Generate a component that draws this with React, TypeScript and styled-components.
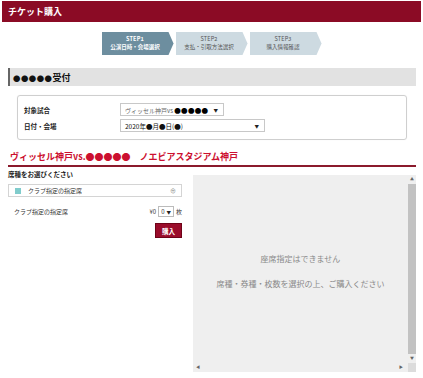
import styled, { createGlobalStyle } from "styled-components";

const GlobalStyle = createGlobalStyle`
  body {
    margin: 0;
    background: #fff;
    font-family: "Noto Sans CJK JP", "Noto Sans", sans-serif;
    color: #222;
  }
`;

const steps = [
  { no: "STEP1", label: "公演日時・会場選択", active: true },
  { no: "STEP2", label: "支払・引取方法選択", active: false },
  { no: "STEP3", label: "購入情報確認", active: false },
];

function App() {
  return (
    <>
      <GlobalStyle />
      <PageHeader>チケット購入</PageHeader>

      <Steps>
        {steps.map((s) => (
          <Step key={s.no} $active={s.active}>
            <StepNo>{s.no}</StepNo>
            <span>{s.label}</span>
          </Step>
        ))}
      </Steps>

      <Content>
        <SectionBar>
          <Dots>●●●●●</Dots>受付
        </SectionBar>

        <FormBox>
          <FieldLabel>対象試合</FieldLabel>
          <SelectBox $width={104} $muted>
            <span>
              ヴィッセル神戸vs <b>●●●●●</b>
            </span>
            <Caret>▼</Caret>
          </SelectBox>
          <FieldLabel>日付・会場</FieldLabel>
          <SelectBox $width={145}>
            <span>2020年●月●日(●)</span>
            <Caret>▼</Caret>
          </SelectBox>
        </FormBox>

        <MatchTitle>ヴィッセル神戸vs.●●●●●　ノエビアスタジアム神戸</MatchTitle>

        <Lower>
          <SeatColumn>
            <SeatPrompt>席種をお選びください</SeatPrompt>
            <SeatSelect>
              <Swatch />
              <SeatName>クラブ指定の指定席</SeatName>
              <ExpandIcon>⊕</ExpandIcon>
            </SeatSelect>
            <SeatRow>
              <span>クラブ指定の指定席</span>
              <QtyGroup>
                <span>¥0</span>
                <QtyBox>
                  0 <Caret>▼</Caret>
                </QtyBox>
                <span>枚</span>
              </QtyGroup>
            </SeatRow>
            <BuyButton type="button">購入</BuyButton>
          </SeatColumn>

          <MapPanel>
            <MapMessage>
              <p>座席指定はできません</p>
              <p>席種・券種・枚数を選択の上、ご購入ください</p>
            </MapMessage>
            <VScroll>
              <ScrollArrow>▲</ScrollArrow>
              <Thumb />
              <ScrollArrow>▼</ScrollArrow>
            </VScroll>
            <HScroll>
              <ScrollArrow>◀</ScrollArrow>
              <ScrollArrow>▶</ScrollArrow>
            </HScroll>
            <Corner />
          </MapPanel>
        </Lower>
      </Content>
    </>
  );
}

export default App;

const PageHeader = styled.header`
  margin: 1px 2px 0;
  height: 21px;
  background: #8b0b25;
  display: flex;
  align-items: center;
  padding-left: 6px;
  color: #fff;
  font-size: 9px;
  font-weight: 700;
`;

const Steps = styled.div`
  display: flex;
  justify-content: center;
  gap: 2px;
  margin-top: 10px;
`;

const Step = styled.div<{ $active?: boolean }>`
  width: 72px;
  height: 23px;
  box-sizing: border-box;
  padding-right: 5px;
  clip-path: polygon(0 0, calc(100% - 5px) 0, 100% 50%, calc(100% - 5px) 100%, 0 100%);
  background: ${(p) => (p.$active ? "#6d8e9f" : "#cddae1")};
  color: ${(p) => (p.$active ? "#fff" : "#555")};
  font-weight: ${(p) => (p.$active ? 700 : 400)};
  display: flex;
  flex-direction: column;
  align-items: center;
  justify-content: center;
  font-size: 5.5px;
  line-height: 1.45;
`;

const StepNo = styled.span`
  letter-spacing: 0.2px;
`;

const Content = styled.main`
  padding: 0 7px 0 8px;
`;

const Dots = styled.span`
  font-size: 0.82em;
  letter-spacing: 0.5px;
`;

const SectionBar = styled.div`
  margin-top: 13px;
  height: 18px;
  background: #e2e2e2;
  border-left: 2px solid #666;
  display: flex;
  align-items: center;
  padding-left: 3px;
  font-size: 9px;
  font-weight: 700;
  color: #111;
`;

const FormBox = styled.div`
  margin: 9px 9px 0;
  border: 1px solid #cfcfcf;
  border-radius: 3px;
  box-shadow: 0 0 1px rgba(0, 0, 0, 0.1);
  padding: 7px 6px 7px;
  display: grid;
  grid-template-columns: 96px auto;
  row-gap: 3px;
  align-items: center;
  justify-items: start;
`;

const FieldLabel = styled.div`
  font-size: 6.5px;
  font-weight: 700;
  color: #222;
`;

const SelectBox = styled.div<{ $width: number; $muted?: boolean }>`
  width: ${(p) => p.$width}px;
  height: 13px;
  box-sizing: border-box;
  border: 1px solid #c8c8c8;
  background: #fff;
  display: flex;
  align-items: center;
  justify-content: space-between;
  padding: 0 5px 0 4px;
  font-size: ${(p) => (p.$muted ? "6px" : "6.5px")};
  color: ${(p) => (p.$muted ? "#666" : "#111")};

  b {
    color: #000;
    font-size: 6.5px;
    letter-spacing: 0.3px;
  }
`;

const Caret = styled.span`
  font-size: 4.5px;
  color: #222;
`;

const MatchTitle = styled.h2`
  margin: 11px 0 0;
  padding: 0 0 2px 2px;
  border-bottom: 2px solid #8b1a2c;
  font-size: 9px;
  font-weight: 700;
  line-height: 12px;
  color: #cc1030;
`;

const Lower = styled.div`
  display: flex;
  gap: 11px;
  margin-top: 2px;
`;

const SeatColumn = styled.div`
  width: 174px;
  display: flex;
  flex-direction: column;
`;

const SeatPrompt = styled.div`
  font-size: 6.5px;
  font-weight: 700;
  color: #222;
`;

const SeatSelect = styled.div`
  margin-top: 5px;
  height: 13px;
  box-sizing: border-box;
  border: 1px solid #d4d4d4;
  display: flex;
  align-items: center;
  gap: 7px;
  padding: 0 5px 0 6px;
`;

const Swatch = styled.span`
  width: 6px;
  height: 6px;
  background: #80cccc;
`;

const SeatName = styled.span`
  flex: 1;
  font-size: 6px;
  color: #333;
`;

const ExpandIcon = styled.span`
  font-size: 6px;
  color: #888;
`;

const SeatRow = styled.div`
  margin-top: 9px;
  padding-left: 6px;
  display: flex;
  justify-content: space-between;
  align-items: center;
  font-size: 6px;
  color: #333;
`;

const QtyGroup = styled.div`
  display: flex;
  align-items: center;
  gap: 2px;
`;

const QtyBox = styled.span`
  border: 1px solid #bbb;
  padding: 0 2px;
  display: flex;
  gap: 2px;
  align-items: center;
  height: 9px;
`;

const BuyButton = styled.button`
  align-self: flex-end;
  margin-top: 6px;
  width: 27px;
  height: 15px;
  padding: 0;
  background: #9a0c2b;
  border: 1px solid #6e0318;
  color: #fff;
  font-family: inherit;
  font-size: 6.5px;
  font-weight: 700;
`;

const MapPanel = styled.div`
  flex: 1;
  margin-top: 6px;
  height: 197px;
  background: #efefef;
  display: grid;
  grid-template-columns: 1fr 8px;
  grid-template-rows: 1fr 9px;
`;

const MapMessage = styled.div`
  display: flex;
  flex-direction: column;
  align-items: center;
  justify-content: center;
  gap: 14px;
  padding-top: 3px;
  font-size: 8px;
  color: #8a8a8a;

  p {
    margin: 0;
  }
`;

const VScroll = styled.div`
  display: flex;
  flex-direction: column;
  align-items: center;
`;

const Thumb = styled.div`
  flex: 1;
  width: 100%;
  background: #c2c2c2;
`;

const ScrollArrow = styled.span`
  font-size: 4px;
  line-height: 9px;
  color: #666;
  padding: 0 1px;
`;

const HScroll = styled.div`
  display: flex;
  justify-content: space-between;
  align-items: center;
  padding: 0 4px 0 2px;
`;

const Corner = styled.div`
  background: #dcdcdc;
`;
